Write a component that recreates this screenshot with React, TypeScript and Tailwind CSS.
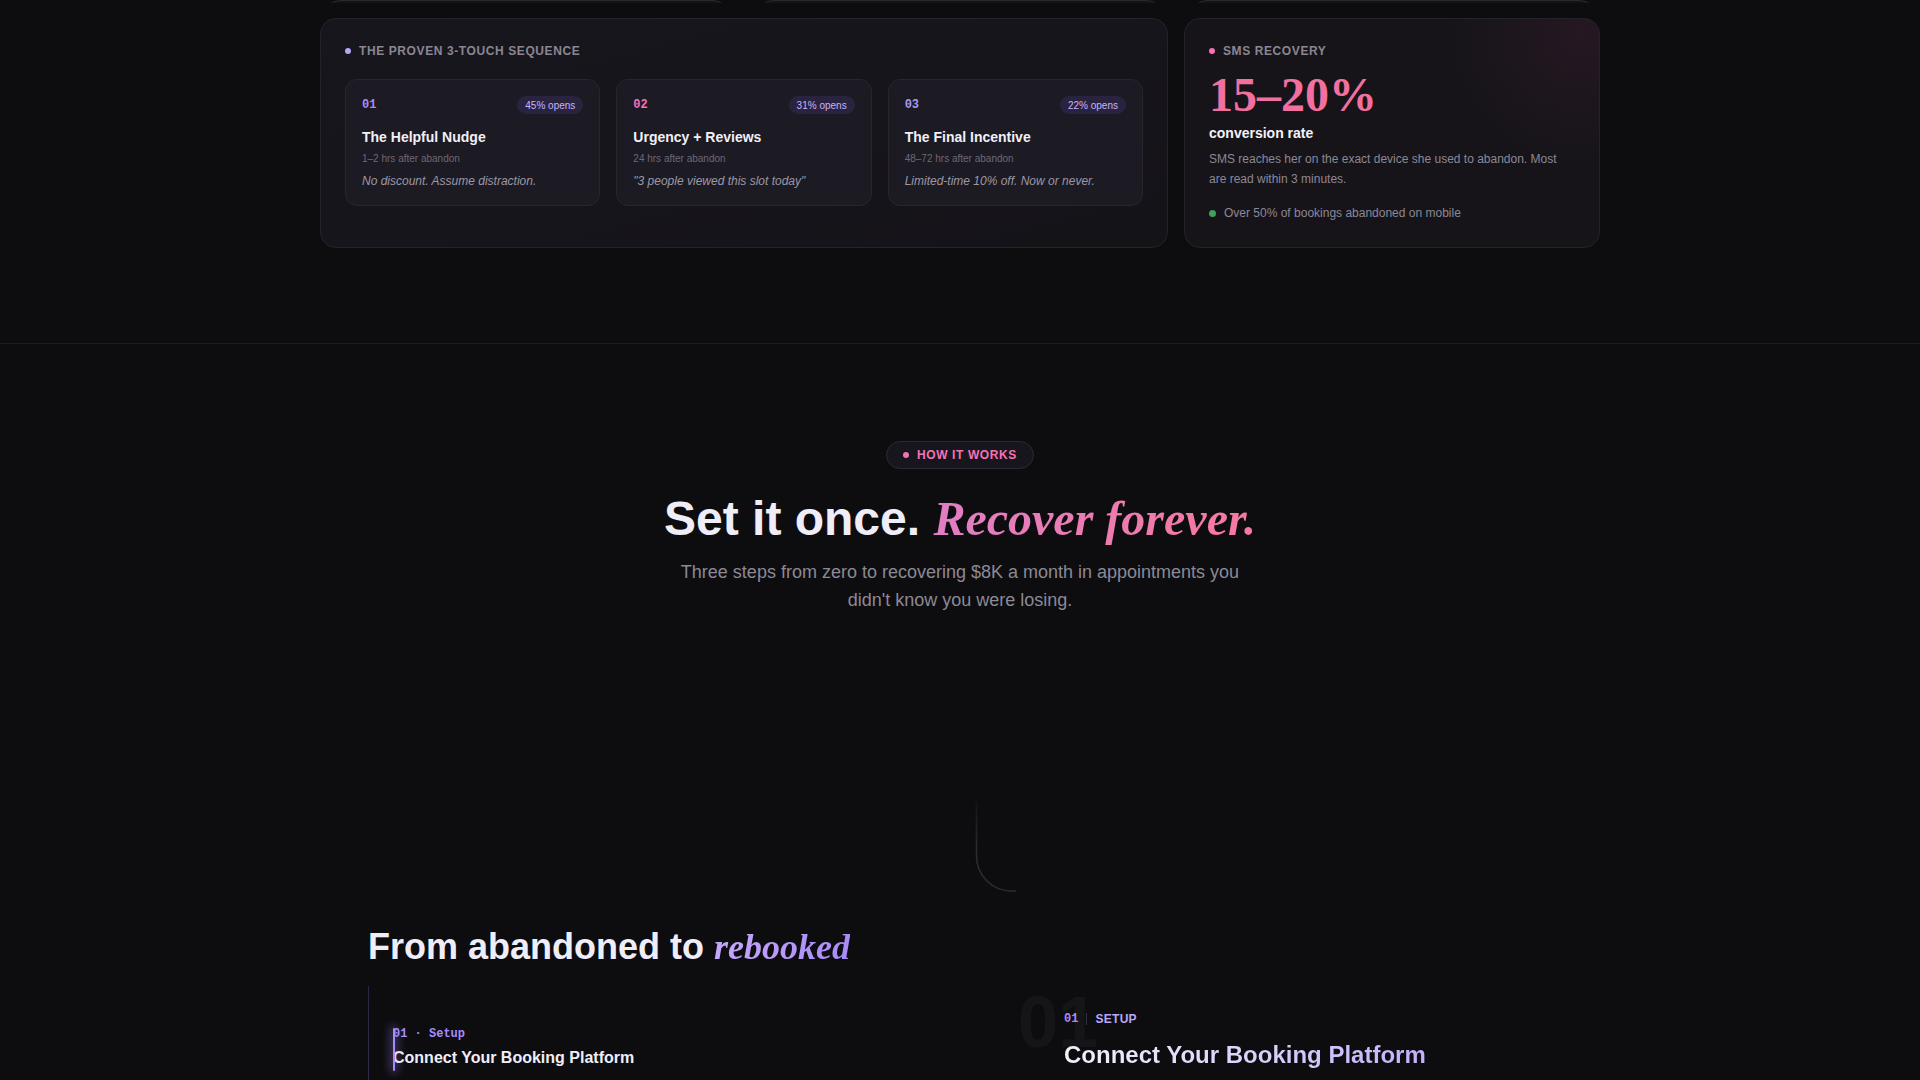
import React from 'react';

const touches = [
  {
    n: '01',
    numColor: 'text-[#a78bfa]',
    opens: '45% opens',
    title: 'The Helpful Nudge',
    when: '1–2 hrs after abandon',
    copy: 'No discount. Assume distraction.',
  },
  {
    n: '02',
    numColor: 'text-[#f472b6]',
    opens: '31% opens',
    title: 'Urgency + Reviews',
    when: '24 hrs after abandon',
    copy: '"3 people viewed this slot today"',
  },
  {
    n: '03',
    numColor: 'text-[#a29bf5]',
    opens: '22% opens',
    title: 'The Final Incentive',
    when: '48–72 hrs after abandon',
    copy: 'Limited-time 10% off. Now or never.',
  },
];

function TouchCard({ t }: { t: (typeof touches)[number] }) {
  return (
    <div className="rounded-xl border border-[#282530] bg-[#1c1a22] p-4">
      <div className="flex items-center justify-between">
        <span className={`[font-family:"Liberation_Mono",monospace] text-xs font-bold leading-4 ${t.numColor}`}>{t.n}</span>
        <span className="rounded-full bg-[#2a2340] px-2 pb-0.5 pt-[3px] text-[10px] leading-[13px] text-[#c4b5fd]">{t.opens}</span>
      </div>
      <div className="mt-[13px] text-sm font-semibold leading-5 text-[#f1eff8]">{t.title}</div>
      <div className="mt-1 text-[10px] leading-[15px] text-[#6d6977]">{t.when}</div>
      <div className="mt-[7px] text-xs italic leading-4 text-[#9c98a6]">{t.copy}</div>
    </div>
  );
}

function Curve() {
  return (
    <svg width="42" height="92" viewBox="0 0 42 92" fill="none">
      <defs>
        <linearGradient id="curveFade" x1="0" y1="0" x2="0" y2="1">
          <stop offset="0" stopColor="#2b2a31" stopOpacity="0.2" />
          <stop offset="0.5" stopColor="#2b2a31" stopOpacity="1" />
          <stop offset="1" stopColor="#2b2a31" stopOpacity="1" />
        </linearGradient>
      </defs>
      <path d="M1.5 0 V55 A35 35 0 0 0 36.5 90 H41" stroke="url(#curveFade)" strokeWidth="1.6" />
    </svg>
  );
}

export default function App() {
  return (
    <div className='min-h-screen overflow-hidden bg-[#0d0d10] [font-family:"Liberation_Sans",Arial,sans-serif] text-[#efedf8]'>
      {/* sequence / sms section */}
      <section className="border-b border-[#1c1b21] pb-[95px]">
        <div className="mx-auto w-[1280px]">
          <div className="grid h-[3px] grid-cols-3 items-end gap-[28px] overflow-hidden px-1">
            <div className="h-10 rounded-2xl border border-[#2a2930] bg-[#141318]" />
            <div className="h-10 rounded-2xl border border-[#2a2930] bg-[#141318]" />
            <div className="h-10 rounded-2xl border border-[#2a2930] bg-[#141318]" />
          </div>

          <div className="mt-[15px] grid grid-cols-3 gap-4">
            <div className="col-span-2 rounded-2xl border border-[#24222a] bg-gradient-to-br from-[#18161d] via-[#17151c] to-[#141318] p-6">
              <div className="flex items-center gap-2 text-xs font-semibold uppercase leading-4 tracking-wider text-[#8a8693]">
                <span className="h-1.5 w-1.5 rounded-full bg-[#b9a4f8]" />
                The proven 3-touch sequence
              </div>
              <div className="mt-5 grid grid-cols-3 gap-4">
                {touches.map((t) => (
                  <TouchCard key={t.n} t={t} />
                ))}
              </div>
            </div>

            <div className="relative overflow-hidden rounded-2xl border border-[#24222a] bg-[#161419] p-6">
              <div className="pointer-events-none absolute inset-0 bg-[radial-gradient(circle_at_96%_6%,rgba(236,72,153,0.07),transparent_30%)]" />
              <div className="relative">
                <div className="flex items-center gap-2 text-xs font-semibold uppercase leading-4 tracking-wider text-[#8a8693]">
                  <span className="h-1.5 w-1.5 rounded-full bg-[#f472b6]" />
                  SMS Recovery
                </div>
                <div className='mt-3 [font-family:"Liberation_Serif",serif] text-5xl font-bold leading-none text-[#f2709f]'>15–20%</div>
                <div className="mt-1 text-sm font-semibold leading-5 text-[#f4f2fa]">conversion rate</div>
                <p className="mt-1.5 text-xs leading-5 text-[#8c8896]">
                  SMS reaches her on the exact device she used to abandon. Most are read within 3 minutes.
                </p>
                <div className="mt-[14px] flex items-center gap-2 text-xs leading-5 text-[#8c8896]">
                  <span className="h-[7px] w-[7px] rounded-full bg-[#3f9f5c]" />
                  Over 50% of bookings abandoned on mobile
                </div>
              </div>
            </div>
          </div>
        </div>
      </section>

      {/* how it works */}
      <section className="pt-[97px] pb-40">
        <div className="text-center">
          <span className="inline-flex items-center gap-2 rounded-full border border-[#2c2935] bg-[#18161d] px-4 py-[5px] text-xs font-bold uppercase leading-4 tracking-wider text-[#f472b6]">
            <span className="h-1.5 w-1.5 rounded-full bg-[#f472b6]" />
            How it works
          </span>
          <h2 className="mt-5 text-5xl font-bold leading-tight text-[#efedf8]">
            Set it once.{' '}
            <span className='bg-gradient-to-r from-[#e07ec4] to-[#f7789f] bg-clip-text [font-family:"Liberation_Serif",serif] font-bold italic text-transparent'>
              Recover forever.
            </span>
          </h2>
          <p className="mx-auto mt-[9px] max-w-xl text-lg leading-7 text-[#8c8995]">
            Three steps from zero to recovering $8K a month in appointments you didn't know you were losing.
          </p>
        </div>

        <div className="mx-auto w-[1184px]">
          <div className="ml-[607px] mt-[187px]">
            <Curve />
          </div>

          <h3 className="mt-[34px] text-4xl font-bold leading-10 text-[#efedf8]">
            From abandoned to{' '}
            <span className='bg-gradient-to-r from-[#c4a8fb] to-[#a98af7] bg-clip-text [font-family:"Liberation_Serif",serif] font-bold italic text-transparent'>
              rebooked
            </span>
          </h3>

          <div className="mt-[19px] grid grid-cols-[648px_1fr]">
            <div className="flex">
              <div className="w-px self-stretch bg-gradient-to-b from-[#2a2540] via-[#3a3352] to-[#3a3352]" />
              <div className="pl-6 pt-10">
                <div className="relative">
                  <div className="absolute left-0 top-0.5 h-[43px] w-[2px] rounded-full bg-[#a78bfa] shadow-[0_0_10px_2px_rgba(167,139,250,0.45)]" />
                  <div className='[font-family:"Liberation_Mono",monospace] text-xs font-bold leading-4 text-[#a78bfa]'>01 · Setup</div>
                  <div className="mt-1 text-base font-semibold leading-6 text-[#f0eef8]">Connect Your Booking Platform</div>
                  <p className="mt-2 max-w-[520px] text-sm leading-6 text-[#8c8995]">
                    Link Vagaro, Square, Boulevard or GlossGenius in two clicks. We watch every checkout that starts and never finishes.
                  </p>
                </div>
                <div className="mt-10 opacity-60">
                  <div className='[font-family:"Liberation_Mono",monospace] text-xs font-bold leading-4 text-[#8c8995]'>02 · Launch</div>
                  <div className="mt-1 text-base font-semibold leading-6 text-[#c9c6d2]">Turn On the 3-Touch Sequence</div>
                </div>
                <div className="h-40" />
              </div>
            </div>

            <div className="relative pl-12 pt-[25px]">
              <div className="pointer-events-none absolute left-0.5 top-0 text-7xl font-bold leading-none text-white/[0.035]">01</div>
              <div className="relative flex items-center gap-2 leading-4">
                <span className='[font-family:"Liberation_Mono",monospace] text-xs font-bold text-[#a78bfa]'>01</span>
                <span className="h-3 w-px bg-[#34303f]" />
                <span className="text-xs font-semibold uppercase tracking-wide text-[#b9a6f7]">Setup</span>
              </div>
              <div className="relative mt-3 inline-block bg-gradient-to-r from-[#f3f1fb] via-[#dcd3fb] to-[#c2b0fb] bg-clip-text text-2xl font-bold leading-8 text-transparent">
                Connect Your Booking Platform
              </div>
              <p className="relative mt-3 max-w-[440px] text-base leading-7 text-[#8c8995]">
                Two clicks. No developer. We start listening for abandoned checkouts the moment you connect.
              </p>
            </div>
          </div>
        </div>
      </section>
    </div>
  );
}
